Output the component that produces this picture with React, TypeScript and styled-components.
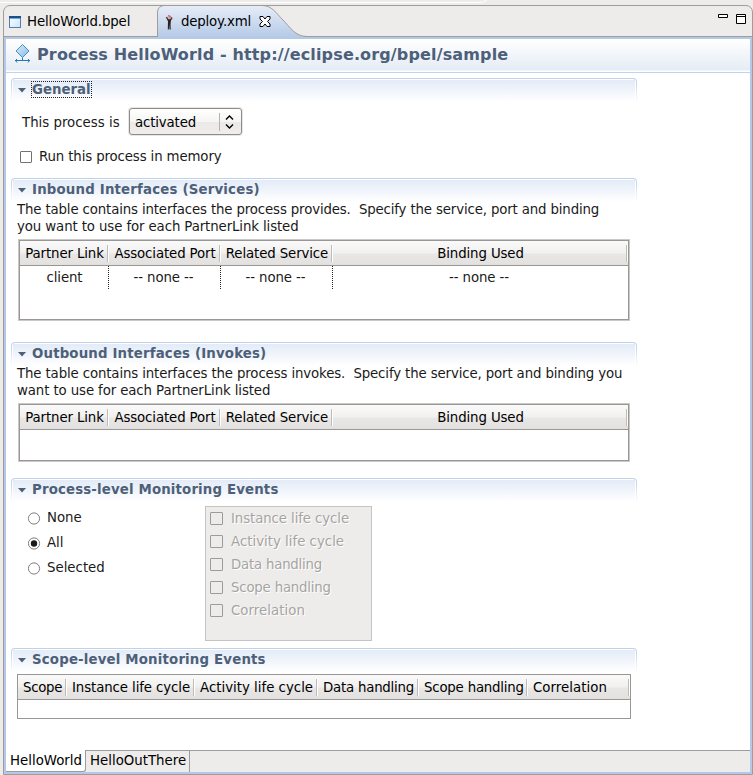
import React from "react";
import styled, { createGlobalStyle } from "styled-components";

const Global = createGlobalStyle`
  * { box-sizing: border-box; }
  body { margin: 0; background: #edeceb; }
`;

const Frame = styled.div`
  width: 753px;
  height: 775px;
  padding: 5px 0 0 3px;
  overflow: hidden;
  background: #edeceb;
  font: 13.33px/17px "DejaVu Sans", sans-serif;
  color: #1a1a1a;
  white-space: pre;
  position: relative;
`;

const Sliver = styled.svg`
  position: absolute;
  left: 0;
  top: 0;
`;

const Folder = styled.div`
  height: 770px;
  display: flex;
  flex-direction: column;
  border: 1px solid #9f9d9b;
  border-radius: 7px 7px 0 0;
  overflow: hidden;
`;

const TabStrip = styled.div`
  height: 31px;
  flex: none;
  display: flex;
  border-bottom: 1px solid #9f9d9b;
`;

const EditorTab = styled.div<{ $width: number; $inset: number }>`
  width: ${(p) => p.$width}px;
  height: 31px;
  display: flex;
  align-items: center;
  padding-left: ${(p) => p.$inset}px;
  color: #000;
  position: relative;
`;

const TabShape = styled.svg`
  position: absolute;
  left: 0;
  top: -1px;
`;

const Text = styled.span<{ $track?: number }>`
  letter-spacing: ${(p) => p.$track ?? 0}px;
  position: relative;
`;

const TabIcon = styled.svg<{ $gap: number }>`
  flex: none;
  position: relative;
  margin-right: ${(p) => p.$gap}px;
`;

const CloseIcon = styled.svg`
  position: relative;
  margin-left: 8px;
`;

const WindowButtons = styled.svg`
  margin: 7px 4px 0 auto;
`;

const Body = styled.div`
  flex: 1;
  min-height: 0;
  display: flex;
  flex-direction: column;
  border: 2px solid #b4c9e7;
  background: #fff;
`;

const FormHeader = styled.header`
  flex: none;
  height: 34px;
  display: flex;
  align-items: center;
  padding: 0 0 3px 8px;
  background: linear-gradient(#fff, #e5ecf6 31px, #fff 32px, #fff 33px, #bed3ee 33px);
`;

const FormTitle = styled.h1`
  margin: 0 0 0 6px;
  font-size: 16px;
  line-height: 20px;
  letter-spacing: 0.145px;
  color: #4d6079;
`;

const Form = styled.main`
  flex: 1;
  padding: 5px 0 0 5px;
`;

const Section = styled.section<{ $height: number }>`
  width: 626px;
  height: ${(p) => p.$height}px;
`;

const SectionBar = styled.div`
  height: 24px;
  display: flex;
  align-items: flex-start;
  padding: 3px 0 0 6px;
  border-radius: 4px 4px 0 0;
  border: 1px solid transparent;
  border-bottom: 0;
  background: linear-gradient(#e3ebf7, #fff 22px) 1px 1px / 622px 22px no-repeat padding-box,
    linear-gradient(#fff, #fff) padding-box,
    linear-gradient(#bdd1eb, #c6d8ef 6px, #fff 24px) border-box;
`;

const Twistie = styled.svg`
  margin: 6px 5px 0 0;
`;

const SectionTitle = styled.h2<{ $focused?: boolean; $track?: number }>`
  margin: -1px 0 0;
  padding: 0 1px 0 1px;
  height: 17px;
  font-size: 13.33px;
  line-height: 17px;
  color: #4d6079;
  letter-spacing: ${(p) => p.$track ?? 0}px;
  outline: ${(p) => (p.$focused ? "1px dotted #222" : "none")};
  outline-offset: -1px;
`;

const Field = styled.div`
  display: flex;
  align-items: center;
  height: 27px;
  margin: 6px 0 0 11px;
`;

const FieldLabel = styled.label`
  padding-top: 2px;
  width: 98px;
`;

const Combo = styled.div`
  width: 113px;
  height: 27px;
  margin-left: 9px;
  padding: 2px 4px 0 5px;
  display: flex;
  align-items: center;
  border: 1px solid #8e8b88;
  border-radius: 3px;
  box-shadow: 0 0 0 1px #e9e7e5;
  background: linear-gradient(#fff, #f6f5f4 50%, #ebe9e8 51%, #efeeed);
  color: #000;
`;

const ComboArrows = styled.svg`
  margin-left: auto;
`;

const CheckRow = styled.div`
  display: flex;
  align-items: center;
  height: 17px;
  margin: 13px 0 0 9px;
`;

const Box = styled.span<{ $disabled?: boolean }>`
  flex: none;
  width: ${(p) => (p.$disabled ? 13 : 12)}px;
  height: ${(p) => (p.$disabled ? 13 : 12)}px;
  margin-right: ${(p) => (p.$disabled ? 8 : 7)}px;
  border: 1px solid ${(p) => (p.$disabled ? "#9d9b99" : "#747270")};
  border-radius: 1px;
  background: ${(p) => (p.$disabled ? "#edeceb" : "#fff")};
`;

const Description = styled.div`
  display: flex;
  flex-direction: column;
  margin: -1px 0 5px 6px;
`;

const Table = styled.div<{ $height: number; $plain?: boolean }>`
  width: ${(p) => (p.$plain ? 614 : 610)}px;
  height: ${(p) => p.$height}px;
  margin: ${(p) => (p.$plain ? "2px 0 0 6px" : "0 0 0 8px")};
  border: 1px solid #999694;
  box-shadow: ${(p) => (p.$plain ? "none" : "0 0 0 1px #cbc9c7")};
`;

const HeadRow = styled.div<{ $columns: string }>`
  display: grid;
  grid-template-columns: ${(p) => p.$columns};
  height: 25px;
  border-bottom: 1px solid #999694;
  background: linear-gradient(#fafafa, #f1f0ef 50%, #e9e7e6 55%, #e3e1df);
  color: #000;
`;

const HeadCell = styled.div<{ $start?: boolean }>`
  display: flex;
  align-items: center;
  justify-content: ${(p) => (p.$start ? "flex-start" : "center")};
  padding-left: ${(p) => (p.$start ? 5 : 0)}px;
  background: linear-gradient(#bebbb8, #bebbb8) right 1px top 4px / 1px 17px no-repeat,
    linear-gradient(#fff, #fff) right 0 top 4px / 1px 17px no-repeat;
`;

const BodyRow = styled.div<{ $columns: string }>`
  display: grid;
  grid-template-columns: ${(p) => p.$columns};
  height: 23px;
`;

const BodyCell = styled.div`
  display: flex;
  align-items: center;
  justify-content: center;
  padding-right: 3px;
  letter-spacing: -0.1px;
  background: repeating-linear-gradient(#222 0 1px, transparent 1px 2px) right 0 top / 1px 23px no-repeat;
  &:first-child { padding-right: 0; }
  &:last-child { background: none; }
`;

const Events = styled.div`
  display: flex;
  padding: 4px 0 0 17px;
`;

const RadioGroup = styled.div`
  width: 177px;
`;

const RadioRow = styled.div`
  display: flex;
  align-items: center;
  height: 25px;
`;

const RadioMark = styled.svg`
  margin-right: 6px;
`;

const RadioLabel = styled.span`
  padding-bottom: 2px;
`;

const DisabledPanel = styled.div`
  width: 167px;
  height: 135px;
  padding-left: 4px;
  border: 1px solid #c6c4c2;
  background: #edeceb;
  color: #a6a4a2;
  text-shadow: 1px 1px 0 #fff;
`;

const DisabledRow = styled.div`
  display: flex;
  align-items: center;
  height: 23px;
`;

const PageTabs = styled.footer`
  flex: none;
  height: 22px;
  display: flex;
  background: #edeceb;
  color: #000;
`;

const ActivePage = styled.div`
  width: 80px;
  height: 22px;
  padding: 2px 0 0 4px;
  background: #fff;
  border: 1px solid #9f9d9b;
  border-width: 0 1px 1px 0;
  border-radius: 0 0 3px 0;
`;

const Page = styled.div`
  width: 104px;
  height: 22px;
  padding: 1px 0 0 4px;
  border: 1px solid #9f9d9b;
  border-width: 1px 1px 0 0;
`;

const PageFill = styled.div`
  flex: 1;
  border-top: 1px solid #9f9d9b;
`;

const LINKS = ["Partner Link", "Associated Port", "Related Service", "Binding Used"];
const LINK_COLUMNS = "89px 112px 112px 1fr";
const SCOPES: [string, number][] = [
  ["Scope", -0.3],
  ["Instance life cycle", -0.1],
  ["Activity life cycle", 0],
  ["Data handling", -0.22],
  ["Scope handling", -0.2],
  ["Correlation", 0.05],
];
const SCOPE_COLUMNS = "49px 128px 123px 101px 109px 1fr";

function SectionHead({ title, focused, track }: { title: string; focused?: boolean; track?: number }) {
  return (
    <SectionBar>
      <Twistie width="8" height="5">
        <path d="M0 0H8L4 4.5Z" fill="#4d6079" />
      </Twistie>
      <SectionTitle $focused={focused} $track={track}>{title}</SectionTitle>
    </SectionBar>
  );
}

function LinkHead() {
  return (
    <HeadRow $columns={LINK_COLUMNS}>
      {LINKS.map((name) => (
        <HeadCell key={name}><Text $track={-0.12}>{name}</Text></HeadCell>
      ))}
    </HeadRow>
  );
}

function Radio({ label, on }: { label: string; on?: boolean }) {
  return (
    <RadioRow>
      <RadioMark width="13" height="13">
        <circle cx="6" cy="6.5" r="5.6" fill="#fff" stroke="#807e7c" />
        {on && <circle cx="6" cy="6.5" r="3.2" fill="#1a1a1a" />}
      </RadioMark>
      <RadioLabel>{label}</RadioLabel>
    </RadioRow>
  );
}

export default function App() {
  return (
    <Frame>
      <Global />
      <Sliver width="490" height="4">
        <path d="M0 2.5H480Q484 2.5 487 0" fill="none" stroke="#fff" />
      </Sliver>
      <Folder>
        <TabStrip>
          <EditorTab $width={153} $inset={5}>
            <TabIcon width="12" height="12" $gap={6}>
              <defs>
                <linearGradient id="pane" x1="0" y1="0" x2="1" y2="1">
                  <stop offset="0" stopColor="#fff" />
                  <stop offset="1" stopColor="#c4e6fa" />
                </linearGradient>
              </defs>
              <rect x=".5" y=".5" width="11" height="11" fill="url(#pane)" stroke="#5b7ca6" />
              <rect x="0" y="0" width="12" height="2" fill="#1c4f8e" />
              <rect x="1" y="2" width="10" height="1" fill="#6fa8dc" />
            </TabIcon>
            <Text $track={-0.12}>HelloWorld.bpel</Text>
          </EditorTab>
          <EditorTab $width={170} $inset={8}>
            <TabShape width="170" height="33">
              <defs>
                <linearGradient id="tab" x1="0" y1="0" x2="0" y2="1">
                  <stop offset="0" stopColor="#e6edf7" />
                  <stop offset="1" stopColor="#b4c9e7" />
                </linearGradient>
              </defs>
              <path d="M.5 33V7Q1 1 7 .5H105C115 .5 119 8 126 15S138 31.5 150 31.5V33Z" fill="url(#tab)" />
              <path d="M.5 32V7Q1 1 7 .5H105C115 .5 119 8 126 15S138 31.5 150 31.5" fill="none" stroke="#9f9d9b" />
            </TabShape>
            <TabIcon width="9" height="16" $gap={7}>
              <path d="M1.500 3L3 6H5.500L7 3.500M4.500 6V10" fill="none" stroke="#4a3830" strokeWidth="1.500" />
              <path d="M3 5.500H6L5.500 10L5.800 15.500H4.500L4.300 11L3.800 15.500H2.800Z" fill="#2b2320" />
              <path d="M3 1.500L6 3" stroke="#e0608c" strokeWidth="1.600" />
              <circle cx="4.500" cy="4" r="1.200" fill="#c9a08e" />
            </TabIcon>
            <Text $track={-0.18}>deploy.xml</Text>
            <CloseIcon width="12" height="12">
              <path d="M1 .5H4L6 3L8 .5H11V3L8.5 5.5L11 8V10.500H8L6 8L4 10.500H1V8L3.500 5.500L1 3Z" fill="#fff" stroke="#000" />
            </CloseIcon>
          </EditorTab>
          <WindowButtons width="30" height="12">
            <path d="M.5 1.500H9.500V4.500H.5ZM18.500 1.500H27.500V10.500H18.500ZM18.500 3.500H27.500" fill="#fff" stroke="#000" />
          </WindowButtons>
        </TabStrip>
        <Body>
          <FormHeader>
            <svg width="17" height="21">
              <defs>
                <linearGradient id="diamond" x1="0" y1="0" x2="1" y2="1">
                  <stop offset="0" stopColor="#dcebf8" />
                  <stop offset="1" stopColor="#86bce8" />
                </linearGradient>
              </defs>
              <path d="M8.500 .5L15 7L8.500 13.500L2 7Z" fill="url(#diamond)" stroke="#4a90c4" />
              <path d="M8.500 13.500V16.500M1 16.500H16M3 15L1.500 16.500L3 18.500M14 15L15.500 16.500L14 18.500" fill="none" stroke="#1f7ab8" />
            </svg>
            <FormTitle>Process HelloWorld - http://eclipse.org/bpel/sample</FormTitle>
          </FormHeader>
          <Form>
            <Section $height={100}>
              <SectionHead title="General" focused />
              <Field>
                <FieldLabel>This process is</FieldLabel>
                <Combo>
                  <Text $track={-0.15}>activated</Text>
                  <ComboArrows width="18" height="19">
                    <path d="M.5 0V18" stroke="#b5b2af" />
                    <path d="M7 6.500L10.500 3L14 6.500M7 11.500L10.500 15L14 11.500" fill="none" stroke="#000" strokeWidth="1.4" />
                  </ComboArrows>
                </Combo>
              </Field>
              <CheckRow>
                <Box />
                <Text $track={-0.13}>Run this process in memory</Text>
              </CheckRow>
            </Section>
            <Section $height={164}>
              <SectionHead title="Inbound Interfaces (Services)" track={0.18} />
              <Description>
                <Text $track={-0.145}>{"The table contains interfaces the process provides.  Specify the service, port and binding"}</Text>
                <Text $track={-0.11}>you want to use for each PartnerLink listed</Text>
              </Description>
              <Table $height={80}>
                <LinkHead />
                <BodyRow $columns={LINK_COLUMNS}>
                  <BodyCell>client</BodyCell>
                  <BodyCell>-- none --</BodyCell>
                  <BodyCell>-- none --</BodyCell>
                  <BodyCell>-- none --</BodyCell>
                </BodyRow>
              </Table>
            </Section>
            <Section $height={136}>
              <SectionHead title="Outbound Interfaces (Invokes)" track={0.16} />
              <Description>
                <Text $track={-0.13}>{"The table contains interfaces the process invokes.  Specify the service, port and binding you"}</Text>
                <Text $track={-0.11}>want to use for each PartnerLink listed</Text>
              </Description>
              <Table $height={57}>
                <LinkHead />
              </Table>
            </Section>
            <Section $height={170}>
              <SectionHead title="Process-level Monitoring Events" track={0.15} />
              <Events>
                <RadioGroup>
                  <Radio label="None" />
                  <Radio label="All" on />
                  <Radio label="Selected" />
                </RadioGroup>
                <DisabledPanel>
                  {SCOPES.slice(1).map(([name, track]) => (
                    <DisabledRow key={name}>
                      <Box $disabled />
                      <Text $track={track}>{name}</Text>
                    </DisabledRow>
                  ))}
                </DisabledPanel>
              </Events>
            </Section>
            <Section $height={90}>
              <SectionHead title="Scope-level Monitoring Events" track={0.17} />
              <Table $height={45} $plain>
                <HeadRow $columns={SCOPE_COLUMNS}>
                  {SCOPES.map(([name, track]) => (
                    <HeadCell key={name} $start><Text $track={track}>{name}</Text></HeadCell>
                  ))}
                </HeadRow>
              </Table>
            </Section>
          </Form>
          <PageTabs>
            <ActivePage>HelloWorld</ActivePage>
            <Page>HelloOutThere</Page>
            <PageFill />
          </PageTabs>
        </Body>
      </Folder>
    </Frame>
  );
}
